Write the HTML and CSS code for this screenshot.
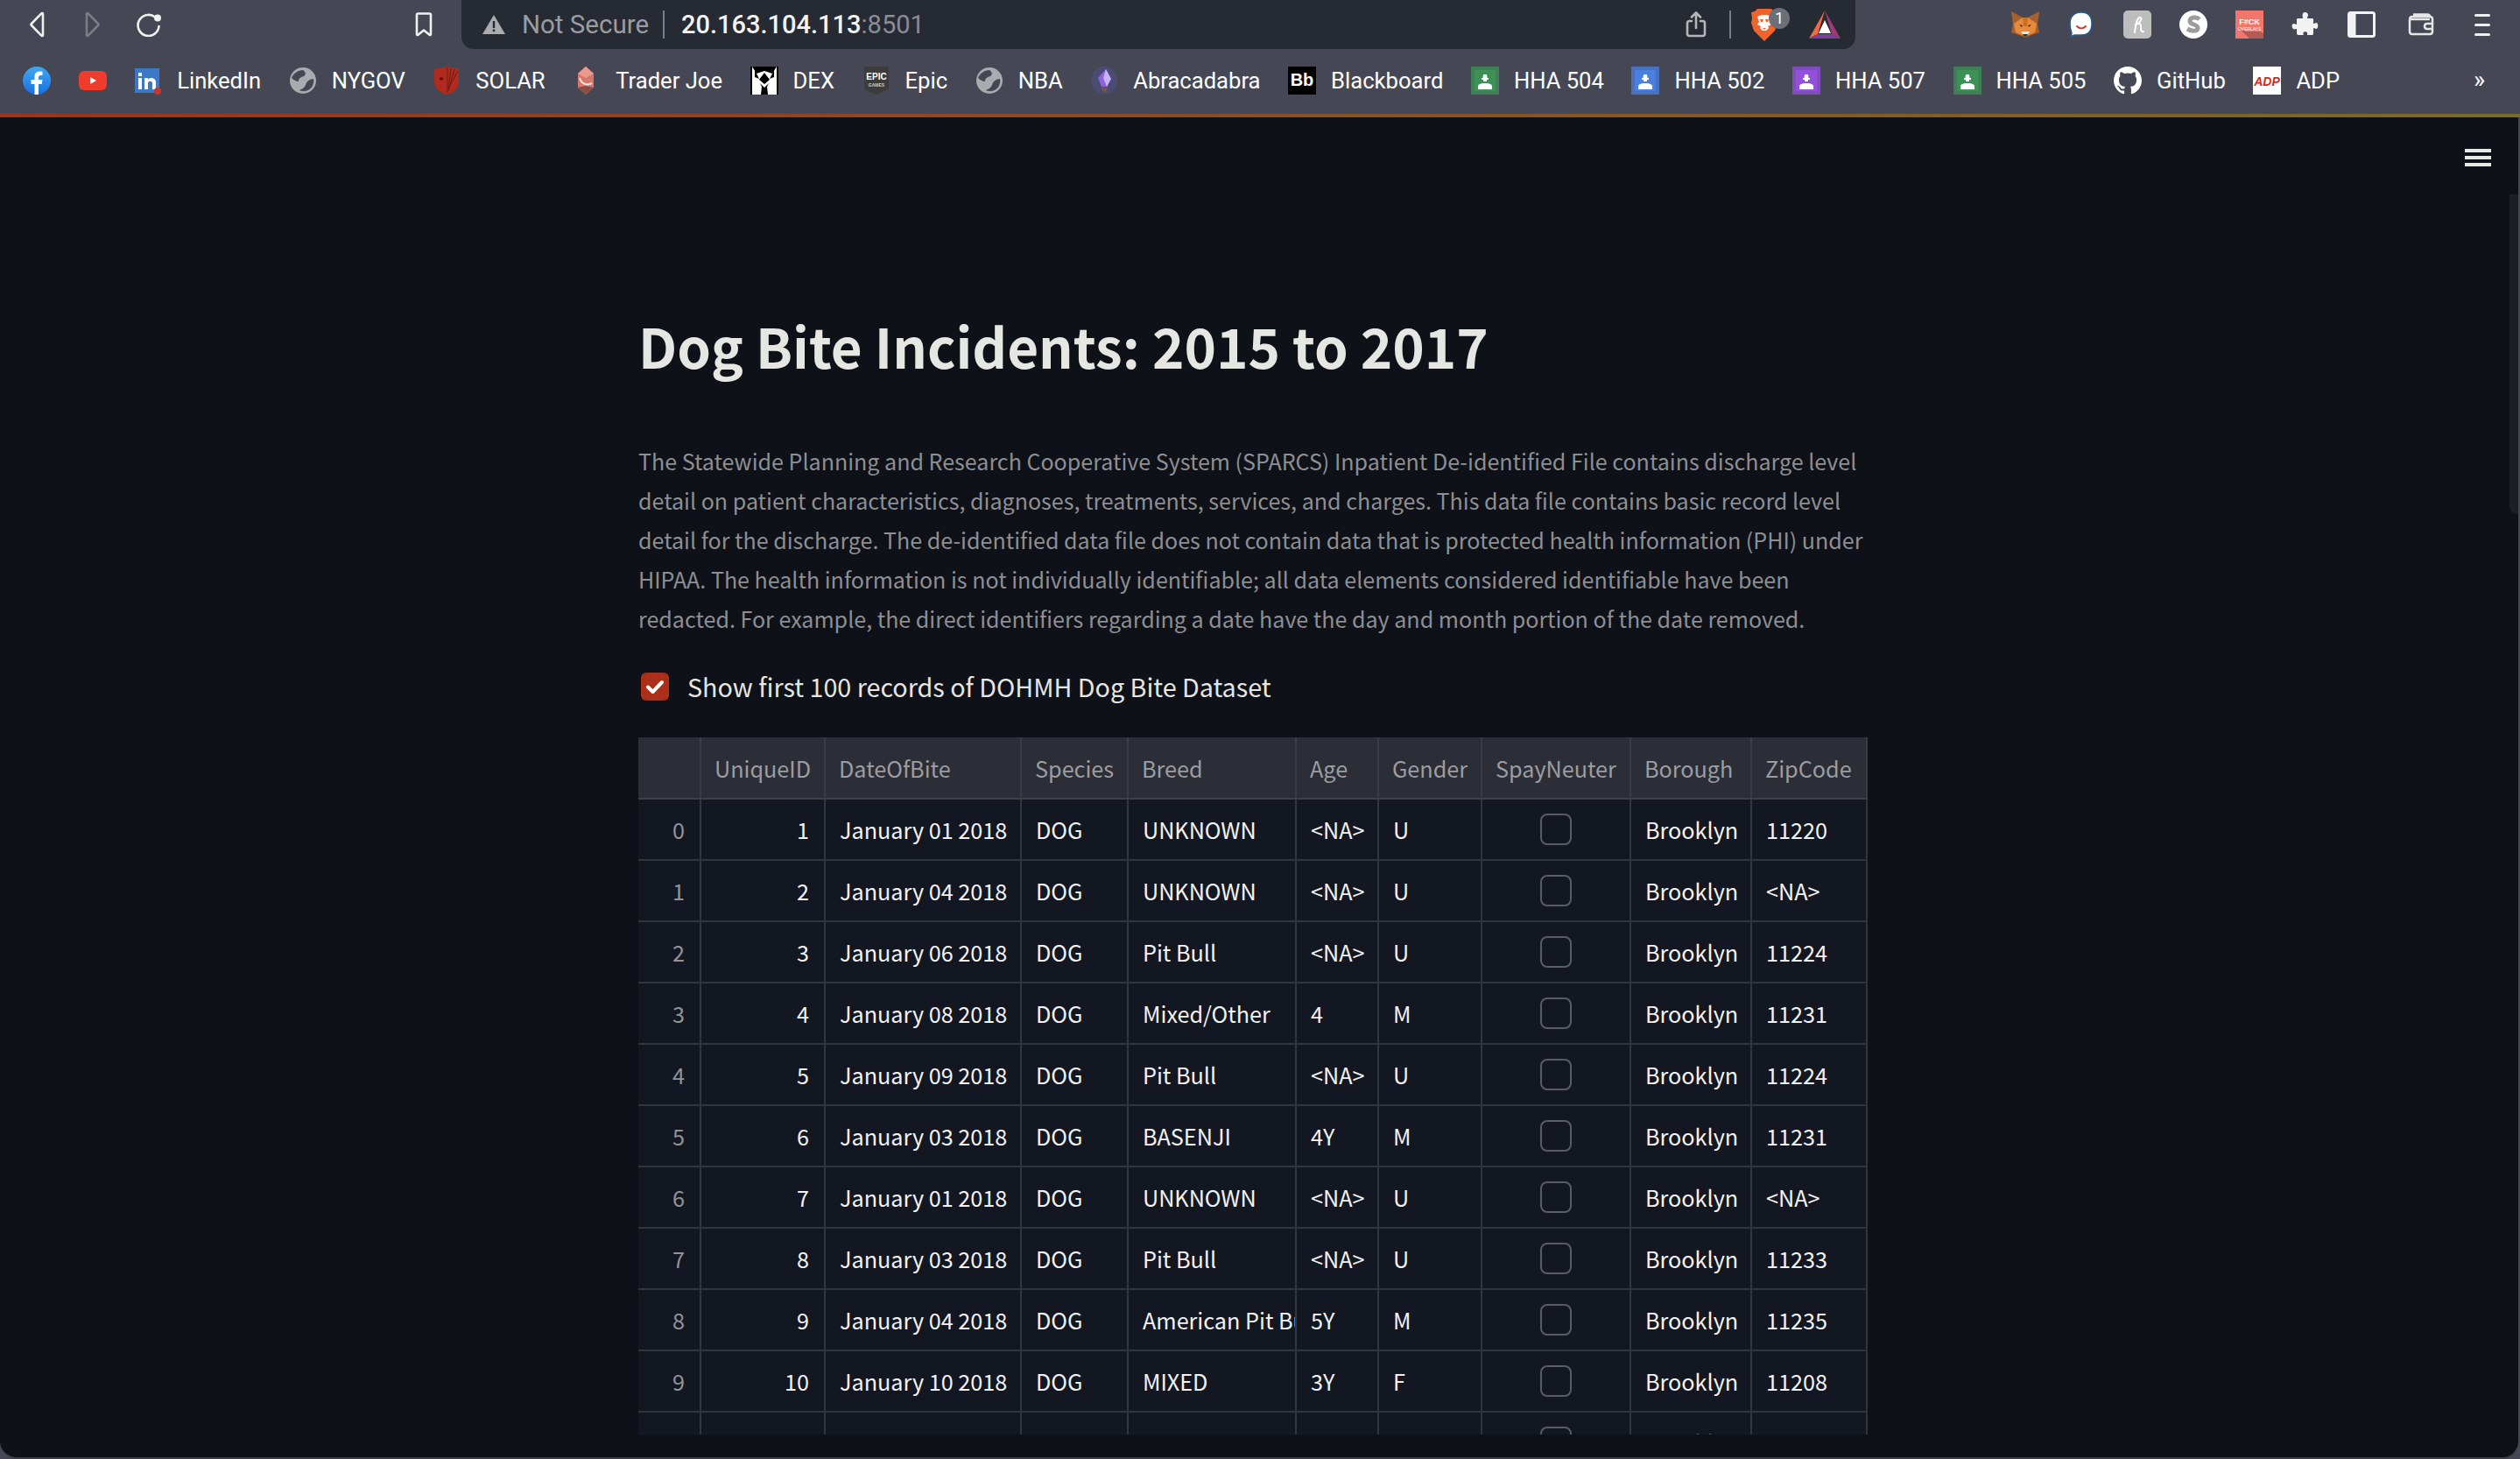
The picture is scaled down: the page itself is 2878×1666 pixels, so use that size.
FILE: index.html
```html
<!DOCTYPE html>
<html lang="en">
<head>
<meta charset="utf-8">
<title>Dog Bite Incidents: 2015 to 2017</title>
<link rel="stylesheet" href="styles.css">
</head>
<body>
<div class="window">
  <header class="toolbar">
    <div class="nav">
      <svg class="ic nav-back" viewBox="0 0 24 30"><path d="M18 3v24c0 1-1 1.300-1.700.6L5 16c-.7-.7-.7-1.300 0-2L16.300 2.400C17 1.700 18 2 18 3z"/></svg>
      <svg class="ic nav-fwd" viewBox="0 0 24 30"><path d="M5 3v24c0 1 1 1.300 1.700.6L18 16c.7-.7.7-1.300 0-2L6.700 2.400C6 1.700 5 2 5 3z"/></svg>
      <svg class="ic nav-reload" viewBox="0 0 30 28"><path d="M22 5.500A12 12 0 1 0 26.500 16"/><circle class="solid" cx="25" cy="6.500" r="4"/></svg>
    </div>
    <svg class="ic nav-mark" viewBox="0 0 22 28"><path d="M3 3c0-1 .7-1.500 1.500-1.500h13c.8 0 1.500.5 1.500 1.500v22c0 1-.8 1.300-1.500.7L11 20.500l-6.500 5.200c-.7.600-1.500.3-1.500-.7z"/></svg>
    <div class="omnibox">
      <svg class="warn" viewBox="0 0 26 22"><path d="M13 0 26 22H0z"/><rect class="warn-mark" x="11.800" y="7" width="2.400" height="8"/><rect class="warn-mark" x="11.800" y="16.500" width="2.400" height="2.600"/></svg>
      <span class="insecure">Not Secure</span>
      <span class="omni-div"></span>
      <span class="url">20.163.104.113<span class="port">:8501</span></span>
      <span class="omni-end">
        <svg class="ic share" viewBox="0 0 24 30"><path d="M7 11H4.500C3 11 2 12 2 13.500v12C2 27 3 28 4.500 28h15c1.500 0 2.500-1 2.500-2.500v-12C22 12 21 11 19.500 11H17M12 19V2M7 6.500 12 1.500l5 5"/></svg>
        <span class="omni-div omni-div-r"></span>
        <span class="brave">
          <svg viewBox="0 0 30 37"><path fill="#f0642c" d="M7 0h16l3 3 4 1-1 7 1 5-3 9-8 8-4 4-4-4-8-8-3-9 1-5-1-7 4-1z"/><path fill="#fff" d="M7 9l5-2h6l5 2-2 6 2 3-4 2 1 2-3 3h-4l-3-3 1-2-4-2 2-3z"/><path fill="#f0642c" d="M10 12h4l-1 3h-2zM16 12h4l-1 3h-2zM13 22h4l-2 2z"/></svg>
          <span class="badge">1</span>
        </span>
        <svg class="bat" viewBox="0 0 36 32"><path fill="#ef6a45" d="M18 0 0 32l10-5z"/><path fill="#9e3a76" d="M18 0 36 32l-10-5z"/><path fill="#7c3d9b" d="M0 32h36l-10-5H10z"/><path fill="#fff" d="M18 11 25 26H11z"/></svg>
      </span>
    </div>
    <div class="exts">
      <svg class="ext" viewBox="0 0 32 30"><path fill="#a8612e" d="M0 0 13 7h6L32 0l-2 15 2 9-9 3-7 3-7-3-9-3 2-9z"/><path fill="#e88a3c" d="M3 14 13 7h6l10 7-2 10-7 3h-8l-7-3z"/><path fill="#c9701f" d="M13 7h6l-1 10h-4z"/><path fill="#33302c" d="M9 15l4 1-1 2zM23 15l-4 1 1 2zM13 26h6l-3 3z"/><path fill="#efe6da" d="M11 23h10l-2 3h-6z"/></svg>
      <svg class="ext" viewBox="0 0 28 30"><path fill="#fff" stroke="#245d8e" stroke-width="1.500" d="M14 1c8 0 12 5 12 13s-4 13-12 13H6l-4 2 1-4c-1-3-2-7-2-11C1 6 6 1 14 1z"/><path fill="none" stroke="#d8392b" stroke-width="2" stroke-linecap="round" d="M9 17c3 3 7 3 10 0"/></svg>
      <span class="ext ext-honey"><svg viewBox="0 0 32 32"><path fill="none" stroke="#fff" stroke-width="2" stroke-linecap="round" d="M13 25c1-7 2-17 6-17 3 0 1 6-6 9 3-3 7-3 7 1 0 3 0 7 3 6"/></svg></span>
      <svg class="ext ext-tall" viewBox="0 0 32 32"><circle cx="16" cy="16" r="16" fill="#fff"/><path fill="none" stroke="#9c9c9c" stroke-width="5" d="M23 10c-3-3-11-3-11 2 0 5 9 3 9 8 0 4-7 4-12 1"/></svg>
      <svg class="ext ext-tall" viewBox="0 0 32 32"><rect width="32" height="32" fill="#f2766b"/><path fill="#b35a54" d="M4 20 12 24h16l4 2v6H16z"/><text class="ext-txt ext-txt-a" x="16" y="16" text-anchor="middle">F#CK</text><text class="ext-txt ext-txt-b" x="16" y="23" text-anchor="middle">OVERLAYS</text></svg>
      <svg class="ext" viewBox="0 0 30 30"><path fill="#f2f2f2" d="M12 2c2-2 6-1 6 2 0 2-1 2-1 4h6c1 0 1 1 1 1v5c2 0 2-1 3-1 3 0 3 7 0 7-1 0-1-1-3-1v6c0 2-1 2-2 2h-5c0-2 1-3-2-4-3 0-3 3-2 4H7c-1 0-2-1-2-2v-5c-2 0-2 1-4 0-2-2-2-6 1-6 1 0 2 1 3 1V9c0-1 1-1 2-1h5c0-2-1-3 0-6z"/></svg>
      <svg class="ext ext-side" viewBox="0 0 32 30"><rect x="1.500" y="1.500" width="29" height="27" rx="2" fill="none" stroke="#f2f2f2" stroke-width="3"/><rect x="1.500" y="1.500" width="8" height="27" fill="#f2f2f2"/></svg>
      <svg class="ext" viewBox="0 0 32 26"><path fill="none" stroke="#e6e6e6" stroke-width="2.500" d="M3 7V21c0 2 1 3 3 3h20c2 0 3-1 3-3V7c0-2-1-3-3-3H6C3 4 2 7 5 7h21M29 12h-6c-4 0-4 6 0 6h6M7 1.500h16c2 0 3 1 3 2.500"/></svg>
      <span class="menu-dots"><i></i><i></i><i></i></span>
    </div>
  </header>

  <nav class="bookmarks">
    <a class="bm bm-icononly"><svg class="fav" viewBox="0 0 32 32"><defs><linearGradient id="fbg" x1="0" y1="0" x2="0" y2="1"><stop offset="0" stop-color="#3fa8f5"/><stop offset="1" stop-color="#1a6fe0"/></linearGradient></defs><circle cx="16" cy="16" r="16" fill="url(#fbg)"/><path fill="#fff" d="M13.500 32V20H9.500v-5h4v-3.500c0-4 2.500-6 6-6 1.700 0 3 .2 3 .2v4.200h-2c-2 0-2.500 1-2.500 2.300V15h4.500l-.8 5h-3.700v12z"/></svg></a>
    <a class="bm bm-icononly"><svg class="fav" viewBox="0 0 32 32"><rect y="5" width="32" height="22" rx="6" fill="#ee3b2e"/><path fill="#fff" d="M13 12l7 4-7 4z"/></svg></a>
    <a class="bm"><svg class="fav" viewBox="0 0 32 32"><rect x="1" y="2" width="28" height="28" fill="#3b78c5"/><rect x="5" y="13" width="4" height="13" fill="#fff"/><rect x="5" y="7" width="4" height="4" fill="#fff"/><path fill="#fff" d="M12 13h4v2c1-3 9-3 9 3v8h-4v-7c0-3-5-3-5 0v7h-4z"/><circle cx="27" cy="28" r="4" fill="#c9352e"/></svg>LinkedIn</a>
    <a class="bm"><svg class="fav" viewBox="0 0 32 32"><use href="#globe"/></svg>NYGOV</a>
    <a class="bm"><svg class="fav" viewBox="0 0 32 32"><path fill="#b12a1e" d="M2 3 16 0l14 3v14c0 8-7 13-14 15C9 30 2 25 2 17z"/><path fill="none" stroke="#6e1a14" stroke-width="1" d="M17 1v29M21 2l-3 26M25 3l-6 22M29 5l-9 16"/><circle cx="10" cy="14" r="2" fill="#5c1510"/></svg>SOLAR</a>
    <a class="bm"><svg class="fav" viewBox="0 0 32 32"><path fill="#d6776b" d="M15 0l9 8v16l-9 8-9-8V8z"/><path fill="#eb9a8d" d="M15 0l9 8-9 5-9-5z"/><path fill="#8a4d48" d="M15 22l9 2-9 8-9-8z"/><path fill="none" stroke="#f4e6df" stroke-width="2" d="M8 13c2 7 8 9 14 6"/></svg>Trader Joe</a>
    <a class="bm"><svg class="fav" viewBox="0 0 32 32"><rect width="32" height="32" fill="#000"/><path fill="#fff" d="M2 0l5 8 9-3 9 3 5-8v32H20l-1-9 2-4-5 5-5-5 2 4-1 9H2z"/><path fill="#000" d="M16 7l6 8-6 5-6-5zM5 4l5 10-5-2zM27 4l-5 10 5-2z"/></svg>DEX</a>
    <a class="bm"><svg class="fav" viewBox="0 0 32 32"><path fill="#3c3c3c" d="M2 0h28v26l-14 6-14-6z"/><text class="epic-txt" x="16" y="15" text-anchor="middle">EPIC</text><text class="epic-sub" x="16" y="23" text-anchor="middle">GAMES</text></svg>Epic</a>
    <a class="bm"><svg class="fav" viewBox="0 0 32 32"><use href="#globe"/></svg>NBA</a>
    <a class="bm"><svg class="fav" viewBox="0 0 32 32"><ellipse cx="16" cy="16" rx="15" ry="16" fill="#4b4a72"/><path fill="#8a63e0" d="M18 3l6 11-5 9h-6L9 13z"/><path fill="#c7b2f5" d="M18 3l-3 10 4 10 5-9z"/><path fill="#6b5a55" d="M10 19l5 10h3l4-10-3 5h-6z"/></svg>Abracadabra</a>
    <a class="bm"><svg class="fav" viewBox="0 0 32 32"><rect width="32" height="32" fill="#000"/><text class="bb-txt" x="16" y="22" text-anchor="middle">Bb</text></svg>Blackboard</a>
    <a class="bm"><svg class="fav cl-green" viewBox="0 0 32 32"><use href="#classroom"/></svg>HHA 504</a>
    <a class="bm"><svg class="fav cl-blue" viewBox="0 0 32 32"><use href="#classroom"/></svg>HHA 502</a>
    <a class="bm"><svg class="fav cl-purple" viewBox="0 0 32 32"><use href="#classroom"/></svg>HHA 507</a>
    <a class="bm"><svg class="fav cl-green" viewBox="0 0 32 32"><use href="#classroom"/></svg>HHA 505</a>
    <a class="bm"><svg class="fav" viewBox="0 0 32 32"><path fill="#fff" d="M16 0C7 0 0 7 0 16c0 7 4.600 13 11 15.200.8.100 1.100-.3 1.100-.8v-3c-4.500 1-5.400-1.900-5.400-1.900-.7-1.900-1.800-2.400-1.800-2.400-1.500-1 .1-1 .1-1 1.600.1 2.500 1.700 2.500 1.700 1.400 2.500 3.800 1.800 4.700 1.400.1-1 .6-1.800 1-2.200-3.600-.4-7.300-1.800-7.300-8 0-1.800.6-3.200 1.600-4.300-.2-.4-.7-2 .1-4.300 0 0 1.400-.4 4.400 1.700a15 15 0 0 1 8 0c3-2.100 4.400-1.700 4.400-1.700.9 2.300.3 3.900.1 4.300 1 1.100 1.600 2.500 1.600 4.300 0 6.200-3.700 7.600-7.300 8 .6.500 1.100 1.500 1.100 3v4.500c0 .5.300.9 1.100.8C27.400 29 32 23 32 16 32 7 25 0 16 0z"/></svg>GitHub</a>
    <a class="bm"><svg class="fav" viewBox="0 0 32 32"><rect width="32" height="32" fill="#fff"/><text class="adp-txt" x="16" y="22" text-anchor="middle">ADP</text></svg>ADP</a>
    <span class="bm-more">»</span>
  </nav>
  <div class="accent"></div>

  <main class="app">
    <svg class="defs" width="0" height="0">
      <symbol id="globe" viewBox="0 0 32 32"><circle cx="16" cy="16" r="15" fill="#a9abae"/><path fill="#454854" d="M16 4c3 2 4 5 1 7-3 1-6 2-6 6-3 0-6-2-8-4C5 8 10 4 16 4zM28 14c1 5-1 10-6 13-3 1-7 2-10 0 3-1 6-3 7-6 1-4 5-7 9-7z"/></symbol>
      <symbol id="classroom" viewBox="0 0 32 32"><rect width="32" height="32" class="cl-edge"/><rect x="4" y="4" width="24" height="24" class="cl-mid"/><circle cx="16" cy="12" r="2.500" fill="#fff"/><rect x="14" y="9" width="4" height="8" fill="#fff"/><rect x="12" y="13" width="8" height="2" fill="#fff"/><path fill="#fff" d="M8 26v-3c0-3 3-4 8-4s8 1 8 4v3z"/></symbol>
    </svg>
    <button class="hamburger" aria-label="menu"><i></i><i></i><i></i></button>
    <div class="scroll-thumb"></div>
    <div class="content">
      <h1 class="title">Dog Bite Incidents: 2015 to 2017</h1>
      <p class="lede">The Statewide Planning and Research Cooperative System (SPARCS) Inpatient De-identified File contains discharge level detail on patient characteristics, diagnoses, treatments, services, and charges. This data file contains basic record level detail for the discharge. The de-identified data file does not contain data that is protected health information (PHI) under HIPAA. The health information is not individually identifiable; all data elements considered identifiable have been redacted. For example, the direct identifiers regarding a date have the day and month portion of the date removed.</p>
      <label class="check-row">
        <span class="check"><svg viewBox="0 0 32 32"><path d="M8 16.500l5.500 5.500L24 11"/></svg></span>
        <span class="check-label">Show first 100 records of DOHMH Dog Bite Dataset</span>
      </label>
      <div class="table-wrap">
        <table class="df">
          <colgroup>
            <col class="c0"><col class="c1"><col class="c2"><col class="c3"><col class="c4"><col class="c5"><col class="c6"><col class="c7"><col class="c8"><col class="c9">
          </colgroup>
          <thead>
            <tr><th></th><th>UniqueID</th><th>DateOfBite</th><th>Species</th><th>Breed</th><th>Age</th><th>Gender</th><th>SpayNeuter</th><th>Borough</th><th>ZipCode</th></tr>
          </thead>
          <tbody>
            <tr><td class="idx">0</td><td class="num">1</td><td>January 01 2018</td><td>DOG</td><td>UNKNOWN</td><td>&lt;NA&gt;</td><td>U</td><td class="box"><span></span></td><td>Brooklyn</td><td>11220</td></tr>
            <tr><td class="idx">1</td><td class="num">2</td><td>January 04 2018</td><td>DOG</td><td>UNKNOWN</td><td>&lt;NA&gt;</td><td>U</td><td class="box"><span></span></td><td>Brooklyn</td><td>&lt;NA&gt;</td></tr>
            <tr><td class="idx">2</td><td class="num">3</td><td>January 06 2018</td><td>DOG</td><td>Pit Bull</td><td>&lt;NA&gt;</td><td>U</td><td class="box"><span></span></td><td>Brooklyn</td><td>11224</td></tr>
            <tr><td class="idx">3</td><td class="num">4</td><td>January 08 2018</td><td>DOG</td><td>Mixed/Other</td><td>4</td><td>M</td><td class="box"><span></span></td><td>Brooklyn</td><td>11231</td></tr>
            <tr><td class="idx">4</td><td class="num">5</td><td>January 09 2018</td><td>DOG</td><td>Pit Bull</td><td>&lt;NA&gt;</td><td>U</td><td class="box"><span></span></td><td>Brooklyn</td><td>11224</td></tr>
            <tr><td class="idx">5</td><td class="num">6</td><td>January 03 2018</td><td>DOG</td><td>BASENJI</td><td>4Y</td><td>M</td><td class="box"><span></span></td><td>Brooklyn</td><td>11231</td></tr>
            <tr><td class="idx">6</td><td class="num">7</td><td>January 01 2018</td><td>DOG</td><td>UNKNOWN</td><td>&lt;NA&gt;</td><td>U</td><td class="box"><span></span></td><td>Brooklyn</td><td>&lt;NA&gt;</td></tr>
            <tr><td class="idx">7</td><td class="num">8</td><td>January 03 2018</td><td>DOG</td><td>Pit Bull</td><td>&lt;NA&gt;</td><td>U</td><td class="box"><span></span></td><td>Brooklyn</td><td>11233</td></tr>
            <tr><td class="idx">8</td><td class="num">9</td><td>January 04 2018</td><td>DOG</td><td>American Pit Bull</td><td>5Y</td><td>M</td><td class="box"><span></span></td><td>Brooklyn</td><td>11235</td></tr>
            <tr><td class="idx">9</td><td class="num">10</td><td>January 10 2018</td><td>DOG</td><td>MIXED</td><td>3Y</td><td>F</td><td class="box"><span></span></td><td>Brooklyn</td><td>11208</td></tr>
            <tr><td class="idx">10</td><td class="num">11</td><td>January 11 2018</td><td>DOG</td><td>UNKNOWN</td><td>&lt;NA&gt;</td><td>U</td><td class="box"><span></span></td><td>Brooklyn</td><td>11217</td></tr>
          </tbody>
        </table>
      </div>
    </div>
  </main>
</div>
</body>
</html>
```
FILE: styles.css
```css
* { box-sizing: border-box; }
html, body { margin: 0; height: 100%; background: #000; }
body { overflow: hidden; }
.window { width: 2878px; height: 1666px; display: flex; flex-direction: column; background: #454854; font-family: Roboto, "Liberation Sans", sans-serif; }

.toolbar { height: 56px; flex: none; display: flex; align-items: flex-start; color: #fff; }
.ic { display: block; fill: none; stroke: #f0f0f0; stroke-width: 2.6; stroke-linejoin: round; stroke-linecap: round; }
.solid { fill: #f0f0f0; stroke: none; }
.nav { display: flex; align-items: center; height: 56px; padding-left: 31px; }
.nav-back { width: 24px; height: 30px; flex: none; }
.nav-fwd { width: 24px; height: 30px; flex: none; margin-left: 39px; stroke: #7b7d85; }
.nav-reload { width: 30px; height: 28px; flex: none; margin-left: 37px; }
.nav-mark { width: 22px; height: 28px; flex: none; margin: 14px 0 0 288px; }

.omnibox { width: 1592px; height: 56px; flex: none; margin-left: 32px; background: #262a33; border-radius: 0 0 14px 14px; display: flex; align-items: center; padding-left: 24px; }
.warn { width: 26px; height: 22px; display: block; fill: #a9abae; }
.warn-mark { fill: #262a33; }
.insecure { margin-left: 19px; font-size: 29.500px; color: #9a9ca3; }
.omni-div { width: 2px; height: 32px; background: #7b7d85; margin-left: 16px; }
.url { margin-left: 19px; font-size: 29px; color: #f4f4f4; font-weight: 500; }
.port { color: #8b8d94; font-weight: 400; }
.omni-end { margin-left: auto; display: flex; align-items: center; padding-right: 17px; }
.share { width: 24px; height: 30px; stroke: #b5b6ba; }
.omni-div-r { margin-left: 26px; }
.brave { position: relative; display: block; width: 30px; height: 37px; margin-left: 23px; }
.brave svg { display: block; width: 30px; height: 37px; }
.badge { position: absolute; left: 20px; top: -1px; width: 24px; height: 24px; border-radius: 50%; background: #6d6f78; color: #fff; font-size: 18px; line-height: 24px; text-align: center; }
.bat { display: block; width: 36px; height: 32px; margin-left: 36px; }

.exts { display: flex; align-items: center; height: 56px; margin-left: 178px; }
.ext { display: block; width: 32px; height: 30px; margin-right: 32px; flex: none; }
.ext-tall { height: 32px; }
.ext-side { margin-right: 36px; }
.ext-honey { height: 32px; background: #bdbdbd; border-radius: 5px; }
.ext-honey svg { display: block; width: 32px; height: 32px; }
.ext-txt { fill: #fff; font-family: "Liberation Sans", sans-serif; }
.ext-txt-a { font-size: 9px; font-weight: 700; }
.ext-txt-b { font-size: 5px; }
.menu-dots { display: flex; flex-direction: column; gap: 8px; margin-left: 13px; }
.menu-dots i { display: block; width: 18px; height: 3px; border-radius: 2px; background: #f0f0f0; }

.bookmarks { height: 74px; flex: none; display: flex; align-items: center; padding: 0 0 2px 26px; gap: 31.600px; font-size: 25.600px; color: #fff; position: relative; }
.bm { display: flex; align-items: center; gap: 17px; white-space: nowrap; }
.fav { display: block; width: 32px; height: 32px; flex: none; }
.bm-more { position: absolute; left: 2825px; top: 18px; font-size: 28px; }
.cl-green { color: #3d9157; }
.cl-blue { color: #4a7fe0; }
.cl-purple { color: #9350dc; }
.cl-edge { fill: currentColor; opacity: .75; }
.cl-mid { fill: currentColor; }
.epic-txt { fill: #fff; font: 700 10px "Liberation Sans", sans-serif; }
.epic-sub { fill: #ccc; font: 700 5px "Liberation Sans", sans-serif; }
.bb-txt { fill: #fff; font: 700 20px "Liberation Sans", sans-serif; }
.adp-txt { fill: #d62a1f; font: italic 700 14px "Liberation Sans", sans-serif; }

.accent { height: 4px; flex: none; background: linear-gradient(90deg, #a13216, #7a6a28); }

.app { flex: 1; position: relative; min-height: 0; background: #0e1117; overflow: hidden; border-right: 2px solid #46474f; border-bottom: 2px solid #3b3d45; border-radius: 0 0 20px 20px; font-family: "Noto Sans CJK JP", "Noto Sans", sans-serif; }
.defs { position: absolute; }
.hamburger { position: absolute; top: 36px; right: 31px; width: 30px; padding: 0; border: 0; background: none; display: flex; flex-direction: column; gap: 4px; }
.hamburger i { display: block; height: 4px; background: #e8e8e8; }
.scroll-thumb { position: absolute; top: 88px; right: 0; width: 10px; height: 365px; background: #1c2026; border-radius: 0 0 0 10px; }

.content { width: 1405px; margin-left: 729px; }
.title { margin: 0; padding-top: 218px; font-size: 61.900px; line-height: 84px; font-weight: 700; color: #e6e6e3; }
.lede { margin: 68px 0 0; font-size: 25.050px; line-height: 45px; color: #8d8f93; }
.check-row { display: flex; align-items: center; gap: 21px; margin-top: 39px; padding-left: 3px; height: 32px; }
.check { display: block; width: 32px; height: 32px; border-radius: 6px; background: #ab2f19; }
.check svg { display: block; width: 32px; height: 32px; fill: none; stroke: #fff; stroke-width: 4; stroke-linecap: round; stroke-linejoin: round; }
.check-label { font-size: 28.700px; line-height: 32px; color: #e6e6e3; }

.table-wrap { margin-top: 42px; height: 796px; overflow: hidden; }
.df { table-layout: fixed; width: 1404px; border-collapse: separate; border-spacing: 0; font-size: 25.200px; color: #f2f2f2; }
.c0 { width: 72px; } .c1 { width: 142px; } .c2 { width: 224px; } .c3 { width: 122px; } .c4 { width: 192px; }
.c5 { width: 94px; } .c6 { width: 118px; } .c7 { width: 170px; } .c8 { width: 138px; } .c9 { width: 132px; }
.df th { height: 71px; background: #2b2e36; color: #9c9da1; font-weight: 400; text-align: left; padding: 0 0 0 15px; border-right: 2px solid #3a3c42; border-bottom: 2px solid #3f4147; white-space: nowrap; overflow: hidden; }
.df td { height: 70px; background: #131722; padding: 0 0 0 16px; border-right: 2px solid #33353c; border-bottom: 2px solid #33353c; white-space: nowrap; overflow: hidden; }
.df .idx { color: #929396; text-align: right; padding: 0 17px 0 0; }
.df .num { text-align: right; padding: 0 17px 0 0; }
.df .box { padding: 0; }
.box span { display: block; width: 36px; height: 36px; margin: 0 auto; border: 2px solid #5a5c62; border-radius: 8px; }
```
